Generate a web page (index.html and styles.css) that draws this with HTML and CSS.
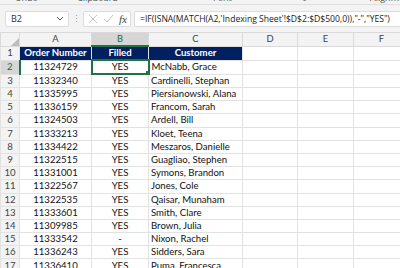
FILE: index.html
```html
<!DOCTYPE html>
<html lang="en">
<head>
    <meta charset="UTF-8">
    <title>Indexing Sheet</title>
    <link rel="stylesheet" href="styles.css">
</head>
<body>
    <div class="ribbon">
        <span class="grp grp-undo">Undo</span>
        <span class="grp grp-clip">Clipboard</span>
        <span class="grp grp-font">Font</span>
        <span class="grp grp-launch">&#8600;</span>
        <span class="grp grp-align">Alignment</span>
    </div>
    <div class="formula-bar">
        <div class="name-box">
            <span>B2</span>
            <svg width="8" height="5" viewBox="0 0 8 5"><path d="M1 1 L4 4 L7 1" fill="none" stroke="#555" stroke-width="1"/></svg>
        </div>
        <div class="dots">&#8942;</div>
        <div class="fx-box">
            <svg width="10" height="10" viewBox="0 0 10 10"><path d="M1 1 L9 9 M9 1 L1 9" stroke="#c4c4c4" stroke-width="1"/></svg>
            <svg width="11" height="10" viewBox="0 0 11 10"><path d="M1 5 L4 8 L10 1" fill="none" stroke="#c4c4c4" stroke-width="1"/></svg>
            <span class="fx">fx</span>
        </div>
        <div class="formula">=IF(ISNA(MATCH(A2,'Indexing Sheet'!$D$2:$D$500,0)),"-","YES")</div>
    </div>
    <table class="sheet">
        <colgroup>
            <col class="c-hdr"><col class="c-a"><col class="c-b"><col class="c-c"><col class="c-d"><col class="c-e"><col class="c-f">
        </colgroup>
        <thead>
            <tr class="col-heads">
                <th class="corner"><svg width="8" height="8" viewBox="0 0 8 8"><path d="M8 0 L8 8 L0 8 Z" fill="#bdbdbd"/></svg></th>
                <th>A</th><th class="sel-col">B</th><th>C</th><th>D</th><th>E</th><th>F</th>
            </tr>
        </thead>
        <tbody id="rows">
            <tr class="title-row">
                <td class="rh">1</td>
                <td class="title">Order Number</td>
                <td class="title">Filled</td>
                <td class="title">Customer</td>
                <td></td><td></td><td></td>
            </tr>
        </tbody>
    </table>

    <script>
        const orders = [
            ['11324729', 'YES', 'McNabb, Grace'],
            ['11332340', 'YES', 'Cardinelli, Stephan'],
            ['11335995', 'YES', 'Piersianowski, Alana'],
            ['11336159', 'YES', 'Francom, Sarah'],
            ['11324503', 'YES', 'Ardell, Bill'],
            ['11333213', 'YES', 'Kloet, Teena'],
            ['11334422', 'YES', 'Meszaros, Danielle'],
            ['11322515', 'YES', 'Guagliao, Stephen'],
            ['11331001', 'YES', 'Symons, Brandon'],
            ['11322567', 'YES', 'Jones, Cole'],
            ['11322535', 'YES', 'Qaisar, Munaham'],
            ['11333601', 'YES', 'Smith, Clare'],
            ['11309985', 'YES', 'Brown, Julia'],
            ['11333542', '-', 'Nixon, Rachel'],
            ['11336243', 'YES', 'Sidders, Sara'],
            ['11336410', 'YES', 'Puma, Francesca']
        ];

        const body = document.getElementById('rows');
        orders.forEach((order, index) => {
            const row = document.createElement('tr');
            const rowNum = index + 2;
            row.innerHTML =
                `<td class="rh${rowNum === 2 ? ' sel-row' : ''}">${rowNum}</td>` +
                `<td class="num">${order[0]}</td>` +
                `<td class="filled${rowNum === 2 ? ' active' : ''}">${order[1]}</td>` +
                `<td class="cust">${order[2]}</td>` +
                '<td></td><td></td><td></td>';
            body.appendChild(row);
        });
    </script>
</body>
</html>
```

FILE: styles.css
```css
body {
    margin: 0;
    width: 400px;
    height: 268px;
    overflow: hidden;
    background-color: #f3f3f3;
    font-family: "Open Sans", "Noto Sans", sans-serif;
}
.ribbon {
    position: relative;
    height: 4px;
    border-bottom: 1px solid #e0e0e0;
    overflow: hidden;
    background-color: #f3f3f3;
}
.grp {
    position: absolute;
    top: -7px;
    font-size: 9px;
    line-height: 10px;
    color: #555;
}
.grp-undo { left: 15px; }
.grp-clip { left: 77px; }
.grp-font { left: 213px; }
.grp-launch { left: 300px; font-size: 8px; }
.grp-align { left: 370px; }
.formula-bar {
    display: flex;
    align-items: center;
    height: 17px;
    margin-top: 5px;
    padding-left: 5px;
}
.name-box {
    display: flex;
    align-items: center;
    justify-content: space-between;
    box-sizing: border-box;
    width: 64px;
    height: 16px;
    padding: 0 4px 0 5px;
    background-color: #fff;
    border: 1px solid #dcdcdc;
    border-radius: 2px;
    font-size: 9px;
    color: #333;
}
.dots {
    width: 14px;
    text-align: center;
    font-size: 9px;
    color: #9a9a9a;
}
.fx-box {
    display: flex;
    align-items: center;
    gap: 5px;
    box-sizing: border-box;
    width: 48px;
    height: 16px;
    padding-left: 4px;
    background-color: #fff;
    border: 1px solid #dcdcdc;
    border-radius: 2px;
}
.fx {
    font-family: "Liberation Serif", serif;
    font-style: italic;
    font-size: 11px;
    color: #444;
}
.formula {
    box-sizing: border-box;
    flex: 1;
    height: 16px;
    margin-left: 3px;
    padding-left: 5px;
    background-color: #fff;
    border: 1px solid #dcdcdc;
    border-right: none;
    border-radius: 2px 0 0 2px;
    font-size: 8.6px;
    line-height: 14px;
    color: #222;
    white-space: nowrap;
}
.sheet {
    margin-top: 5px;
    border-collapse: collapse;
    table-layout: fixed;
    width: 409px;
    background-color: #fff;
    font-family: Lato, "Liberation Sans", sans-serif;
    font-size: 9.6px;
    color: #111;
}
.c-hdr { width: 19px; }
.c-a { width: 72px; }
.c-b { width: 57px; }
.c-c { width: 94px; }
.c-d { width: 55px; }
.c-e { width: 56px; }
.c-f { width: 56px; }
.sheet td, .sheet th {
    height: 13.2px;
    padding: 0;
    border: 1px solid #e2e2e2;
    box-sizing: border-box;
    white-space: nowrap;
    overflow: hidden;
    line-height: 12px;
}
.col-heads th {
    height: 13px;
    background-color: #f3f3f3;
    border-color: #dadada;
    font-weight: normal;
    color: #444;
    font-size: 9.4px;
}
.col-heads th.corner {
    text-align: right;
    vertical-align: bottom;
    line-height: 0;
}
.col-heads th.sel-col {
    background-color: #d6d6d6;
    color: #1e6b3c;
    border-bottom: 2px solid #217346;
}
.rh {
    text-align: center;
    background-color: #f3f3f3;
    color: #444;
    border-color: #dadada;
}
.rh.sel-row {
    background-color: #d6d6d6;
    color: #1e6b3c;
    border-right: 2px solid #217346;
}
.title {
    background-color: #002060;
    color: #fff;
    font-weight: bold;
    text-align: center;
    border-color: #002060;
}
.num, .filled {
    text-align: center;
}
.cust {
    padding-left: 2px !important;
}
.filled.active {
    position: relative;
    border: 2px solid #217346;
}
.filled.active::after {
    content: "";
    position: absolute;
    right: -3px;
    bottom: -3px;
    width: 4px;
    height: 4px;
    background-color: #217346;
    border: 1px solid #fff;
}
```
